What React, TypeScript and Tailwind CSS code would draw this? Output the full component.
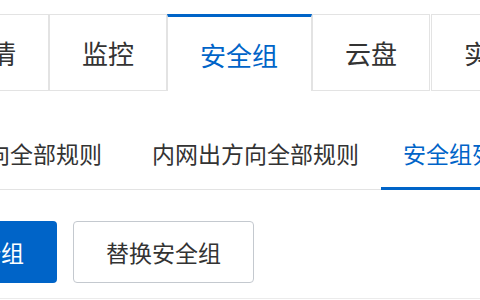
import React from 'react'

const FONT = { fontFamily: '"Noto Sans CJK SC", "Noto Sans", sans-serif' }

const topTabs = ['详情', '监控', '安全组', '云盘', '实例快照']
const subTabs = ['内网入方向全部规则', '内网出方向全部规则', '安全组列表']

export default function App() {
  const activeTop = 2
  const activeSub = 2

  return (
    <div className="w-[480px] h-[300px] overflow-hidden bg-white pt-[14px] text-[#333]" style={FONT}>
      {/* 顶部页签 */}
      <div className="flex whitespace-nowrap ml-[-69px]">
        {topTabs.map((t, i) => {
          const activo = i === activeTop
          return (
            <div
              key={t}
              className={
                activo
                  ? 'shrink-0 border-x border-[#e3e3e3] border-t-[3px] border-t-[#0064c8] h-[77px] pl-[32px] pr-[33px] flex items-center text-[26px] text-[#0064c8] bg-white'
                  : `shrink-0 border border-[#e3e3e3] h-[77px] px-[32px] flex items-center text-[26px] ${i === 4 ? 'ml-px' : ''}`
              }
            >
              {t}
            </div>
          )
        })}
      </div>

      {/* 子页签 */}
      <div className="flex whitespace-nowrap border-b border-[#e3e3e3] ml-[-127px]">
        {subTabs.map((t, i) => {
          const activo = i === activeSub
          return (
            <div
              key={t}
              className={
                activo
                  ? 'shrink-0 pl-[22px] pr-[22px] pt-[48px] pb-[20px] -mb-px border-b-[3px] border-[#0064c8] text-[23px] leading-[28px] text-[#0064c8]'
                  : `shrink-0 pl-[22px] pt-[48px] pb-[22px] text-[23px] leading-[28px] ${i === 0 ? 'pr-[28px]' : 'pr-[22px]'}`
              }
            >
              {t}
            </div>
          )
        })}
      </div>

      {/* 操作按钮 */}
      <div className="flex gap-[16px] mt-[31px] ml-[-124px] whitespace-nowrap">
        <button className="shrink-0 h-[62px] px-[33px] rounded-[4px] bg-[#0064c8] text-white text-[23px]">
          加入安全组
        </button>
        <button className="shrink-0 h-[62px] px-[32px] rounded-[4px] border border-[#c4c9cf] bg-white text-[#333] text-[23px]">
          替换安全组
        </button>
      </div>

      <div className="mt-[15px] border-t border-[#ebebeb]" />
    </div>
  )
}
